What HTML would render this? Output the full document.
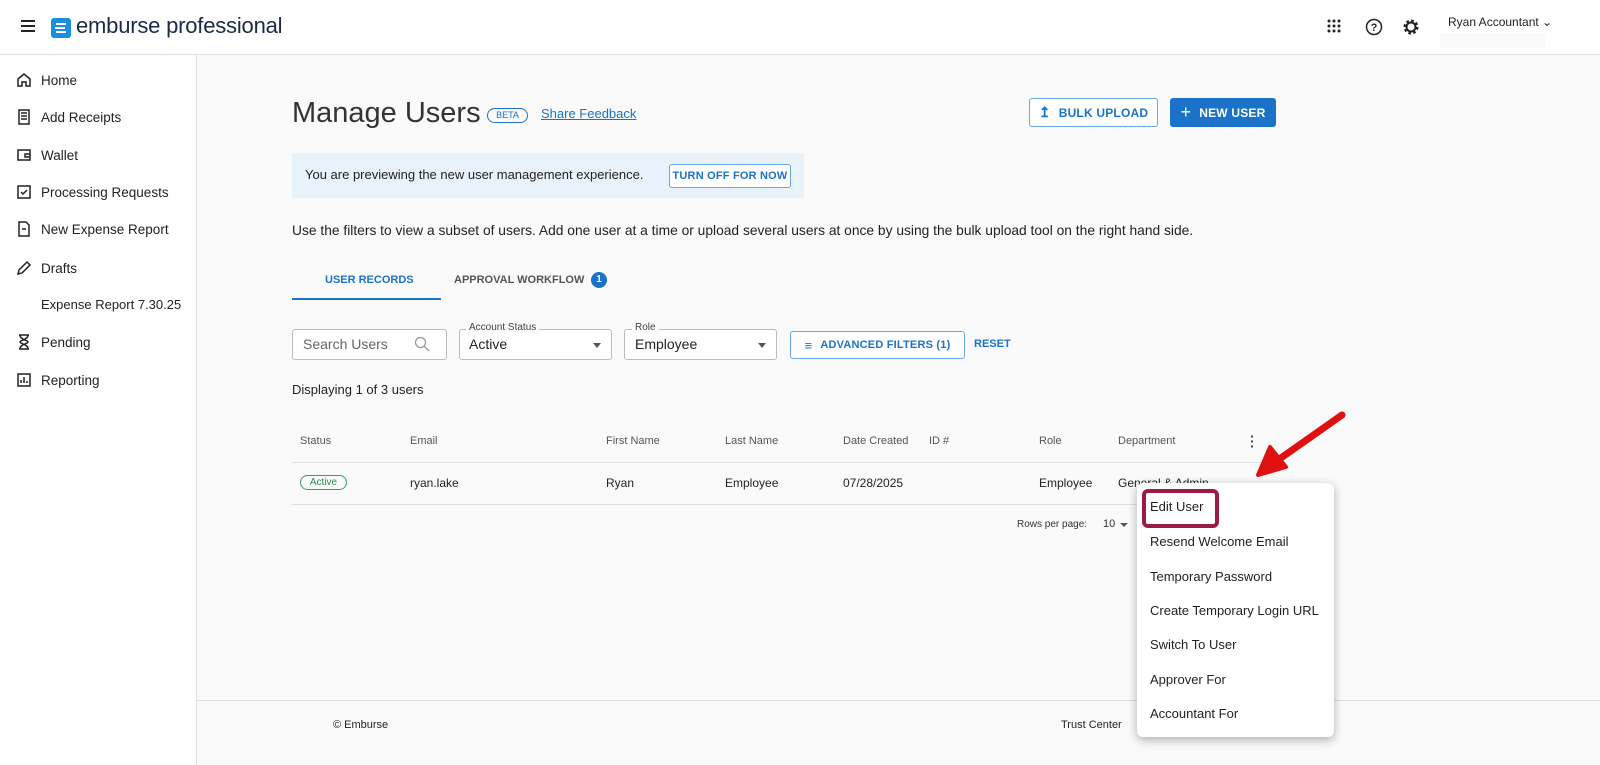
<!DOCTYPE html>
<html><head><style>
*{box-sizing:border-box;margin:0;padding:0}
body{width:1600px;height:765px;overflow:hidden;background:#fafafa;font-family:"Liberation Sans",sans-serif;color:#222;position:relative}
.abs{position:absolute}
.top{position:absolute;left:0;top:0;width:1600px;height:55px;background:#fff;border-bottom:1px solid #e0e0e0}
.side{position:absolute;left:0;top:55px;width:197px;height:710px;background:#fff;border-right:1px solid #e0e0e0}
.nav{position:absolute;left:16px;font-size:13.5px;color:#222;display:flex;align-items:center}
.nav svg{width:16px;height:16px;margin-right:9px}
.btn{position:absolute;border-radius:3px;font-size:12px;font-weight:bold;display:flex;align-items:center;justify-content:center;letter-spacing:.2px}
.th{position:absolute;top:435px;font-size:11px;color:#555}
.td{position:absolute;top:476px;font-size:12px;color:#222}
.mi{position:absolute;left:1150px;font-size:13px;color:#222}
</style></head><body>
<div class="top">
 <div class="abs" style="left:21px;top:20px;width:14px;height:2px;background:#222;box-shadow:0 5px 0 #222,0 10px 0 #222"></div>
 <div class="abs" style="left:51px;top:18px;width:20px;height:20px;background:#1a8fe0;border-radius:3px"></div>
 <div class="abs" style="left:56px;top:23px;width:10px;height:2px;background:#fff;box-shadow:-1px 4px 0 #fff,0 8px 0 #fff"></div>
 <div class="abs" style="left:76px;top:13px;font-size:22px;color:#1b2a44;letter-spacing:-.2px">emburse professional</div>
 <svg class="abs" style="left:1327px;top:19px" width="14" height="14"><g fill="#222"><circle cx="2" cy="2" r="1.5"/><circle cx="7" cy="2" r="1.5"/><circle cx="12" cy="2" r="1.5"/><circle cx="2" cy="7" r="1.5"/><circle cx="7" cy="7" r="1.5"/><circle cx="12" cy="7" r="1.5"/><circle cx="2" cy="12" r="1.5"/><circle cx="7" cy="12" r="1.5"/><circle cx="12" cy="12" r="1.5"/></g></svg>
 <svg class="abs" style="left:1365px;top:18px" width="18" height="18"><circle cx="9" cy="9" r="7.5" fill="none" stroke="#222" stroke-width="1.5"/><text x="9" y="13" font-size="11" text-anchor="middle" font-family="Liberation Sans" font-weight="bold" fill="#222">?</text></svg>
 <svg class="abs" style="left:1402px;top:18px" width="18" height="18"><circle cx="9" cy="9" r="6" fill="none" stroke="#222" stroke-width="3" stroke-dasharray="2.5 2.2"/><circle cx="9" cy="9" r="4.5" fill="none" stroke="#222" stroke-width="2"/></svg>
 <div class="abs" style="left:1448px;top:15px;font-size:12px;color:#222">Ryan Accountant &#8964;</div>
 <div class="abs" style="left:1440px;top:33px;width:105px;height:15px;background:#fafafa"></div>
</div>
<div class="side">
 <div class="nav" style="top:17px"><svg viewBox="0 0 16 16"><path d="M2 7L8 2l6 5v7h-4v-4H6v4H2z" fill="none" stroke="#222" stroke-width="1.5"/></svg>Home</div>
 <div class="nav" style="top:54px"><svg viewBox="0 0 16 16"><path d="M3 1h10v14H3zM5 4h6M5 7h6M5 10h6" fill="none" stroke="#222" stroke-width="1.5"/></svg>Add Receipts</div>
 <div class="nav" style="top:92px"><svg viewBox="0 0 16 16"><path d="M2 3h12v10H2zM9 7h5v3H9z" fill="none" stroke="#222" stroke-width="1.5"/></svg>Wallet</div>
 <div class="nav" style="top:129px"><svg viewBox="0 0 16 16"><path d="M2 2h12v12H2zM5 8l2 2 4-4" fill="none" stroke="#222" stroke-width="1.5"/></svg>Processing Requests</div>
 <div class="nav" style="top:166px"><svg viewBox="0 0 16 16"><path d="M3 1h7l3 3v11H3zM6 8h4" fill="none" stroke="#222" stroke-width="1.5"/></svg>New Expense Report</div>
 <div class="nav" style="top:205px"><svg viewBox="0 0 16 16"><path d="M2 14l1-4 8-8 3 3-8 8z" fill="none" stroke="#222" stroke-width="1.5"/></svg>Drafts</div>
 <div class="nav" style="top:242px;left:41px;font-size:13px">Expense Report 7.30.25</div>
 <div class="nav" style="top:279px"><svg viewBox="0 0 16 16"><path d="M3 1h10M3 15h10M4 1c0 5 8 5 8 7s-8 2-8 7M12 1c0 5-8 5-8 7s8 2 8 7" fill="none" stroke="#222" stroke-width="1.5"/></svg>Pending</div>
 <div class="nav" style="top:317px"><svg viewBox="0 0 16 16"><path d="M2 2h12v12H2zM5 11V8M8 11V5M11 11V9" fill="none" stroke="#222" stroke-width="1.5"/></svg>Reporting</div>
</div>
<div class="abs" style="left:292px;top:97px;font-size:29px;color:#333">Manage Users</div>
<div class="abs" style="left:487px;top:108px;width:41px;height:15px;border:1px solid #1a73c8;border-radius:8px;font-size:9px;color:#1a73c8;text-align:center;line-height:13px">BETA</div>
<div class="abs" style="left:541px;top:106px;font-size:13px;color:#1a73c8;text-decoration:underline">Share Feedback</div>
<div class="btn" style="left:1029px;top:98px;width:129px;height:29px;border:1px solid #6aa6e0;color:#1a73c8;background:#fff"><span style="font-size:14px;margin-right:8px">&#8613;</span>BULK UPLOAD</div>
<div class="btn" style="left:1170px;top:98px;width:106px;height:29px;background:#1a73c8;color:#fff"><span style="font-size:18px;font-weight:normal;margin-right:8px">+</span>NEW USER</div>
<div class="abs" style="left:292px;top:153px;width:512px;height:45px;background:#e8f2fb"></div>
<div class="abs" style="left:305px;top:167px;font-size:13px">You are previewing the new user management experience.</div>
<div class="btn" style="left:669px;top:164px;width:122px;height:24px;border:1px solid #6aa6e0;color:#1a73c8;background:#fff;font-size:11px">TURN OFF FOR NOW</div>
<div class="abs" style="left:292px;top:223px;font-size:13.8px">Use the filters to view a subset of users. Add one user at a time or upload several users at once by using the bulk upload tool on the right hand side.</div>
<div class="abs" style="left:325px;top:274px;font-size:11px;font-weight:bold;color:#1a73c8">USER RECORDS</div>
<div class="abs" style="left:292px;top:298px;width:149px;height:2px;background:#1a73c8"></div>
<div class="abs" style="left:454px;top:274px;font-size:11px;font-weight:bold;color:#555">APPROVAL WORKFLOW</div>
<div class="abs" style="left:591px;top:272px;width:16px;height:16px;border-radius:50%;background:#1a73c8;color:#fff;font-size:10px;text-align:center;line-height:16px;font-weight:bold">1</div>
<div class="abs" style="left:292px;top:329px;width:155px;height:31px;border:1px solid #bbb;border-radius:3px;background:#fff"></div>
<div class="abs" style="left:303px;top:336px;font-size:14px;color:#666">Search Users</div>
<svg class="abs" style="left:414px;top:336px" width="16" height="16"><circle cx="6.5" cy="6.5" r="5" fill="none" stroke="#999" stroke-width="1.3"/><path d="M10 10l5 5" stroke="#999" stroke-width="1.3"/></svg>
<div class="abs" style="left:459px;top:329px;width:153px;height:31px;border:1px solid #bbb;border-radius:3px;background:#fff"></div>
<div class="abs" style="left:466px;top:322px;font-size:10px;color:#444;background:#fafafa;padding:0 3px">Account Status</div>
<div class="abs" style="left:469px;top:336px;font-size:14px">Active</div>
<div class="abs" style="left:593px;top:343px;border:4px solid transparent;border-top:5px solid #555"></div>
<div class="abs" style="left:624px;top:329px;width:153px;height:31px;border:1px solid #bbb;border-radius:3px;background:#fff"></div>
<div class="abs" style="left:632px;top:322px;font-size:10px;color:#444;background:#fafafa;padding:0 3px">Role</div>
<div class="abs" style="left:635px;top:336px;font-size:14px">Employee</div>
<div class="abs" style="left:758px;top:343px;border:4px solid transparent;border-top:5px solid #555"></div>
<div class="btn" style="left:790px;top:331px;width:175px;height:28px;border:1px solid #6aa6e0;color:#1a73c8;background:#fff;font-size:11px"><span style="margin-right:8px;font-size:13px">&#8801;</span>ADVANCED FILTERS (1)</div>
<div class="abs" style="left:974px;top:338px;font-size:11px;font-weight:bold;color:#1a73c8">RESET</div>
<div class="abs" style="left:292px;top:382px;font-size:13px">Displaying 1 of 3 users</div>
<div class="th" style="left:300px">Status</div><div class="th" style="left:410px">Email</div><div class="th" style="left:606px">First Name</div><div class="th" style="left:725px">Last Name</div><div class="th" style="left:843px">Date Created</div><div class="th" style="left:929px">ID #</div><div class="th" style="left:1039px">Role</div><div class="th" style="left:1118px">Department</div>
<div class="abs" style="left:1250px;top:434px;font-size:14px;font-weight:bold;line-height:5px;color:#444">·<br>·<br>·</div>
<div class="abs" style="left:292px;top:462px;width:984px;height:1px;background:#e0e0e0"></div>
<div class="abs" style="left:300px;top:475px;width:47px;height:15px;border:1px solid #3a9a6a;border-radius:8px;font-size:10px;color:#2d8a5a;text-align:center;line-height:13px">Active</div>
<div class="td" style="left:410px">ryan.lake</div><div class="td" style="left:606px">Ryan</div><div class="td" style="left:725px">Employee</div><div class="td" style="left:843px">07/28/2025</div><div class="td" style="left:1039px">Employee</div><div class="td" style="left:1118px">General &amp; Admin</div>
<div class="abs" style="left:292px;top:504px;width:984px;height:1px;background:#e0e0e0"></div>
<div class="abs" style="left:1017px;top:519px;font-size:10px;color:#333">Rows per page:</div>
<div class="abs" style="left:1103px;top:518px;font-size:11px;color:#333">10</div>
<div class="abs" style="left:1120px;top:523px;border:4px solid transparent;border-top:4px solid #555"></div>
<div class="abs" style="left:197px;top:700px;width:1403px;height:1px;background:#e0e0e0"></div>
<div class="abs" style="left:333px;top:719px;font-size:11px;color:#222">© Emburse</div>
<div class="abs" style="left:1061px;top:719px;font-size:11px;color:#222">Trust Center</div>
<div class="abs" style="left:1137px;top:483px;width:197px;height:254px;background:#fff;border-radius:6px;box-shadow:0 3px 10px rgba(0,0,0,.3)"></div>
<div class="abs" style="left:1142px;top:489px;width:77px;height:39px;border:4px solid #9b1b45;border-radius:6px"></div>
<div class="mi" style="top:499px">Edit User</div>
<div class="mi" style="top:534px">Resend Welcome Email</div>
<div class="mi" style="top:569px">Temporary Password</div>
<div class="mi" style="top:603px">Create Temporary Login URL</div>
<div class="mi" style="top:637px">Switch To User</div>
<div class="mi" style="top:672px">Approver For</div>
<div class="mi" style="top:706px">Accountant For</div>
<svg class="abs" style="left:1250px;top:405px" width="100" height="75"><path d="M92 10L18 62" stroke="#e01010" stroke-width="7" stroke-linecap="round"/><path d="M8 70L20 42L36 62Z" fill="#e01010" stroke="#e01010" stroke-width="4" stroke-linejoin="round"/></svg>
</body></html>
